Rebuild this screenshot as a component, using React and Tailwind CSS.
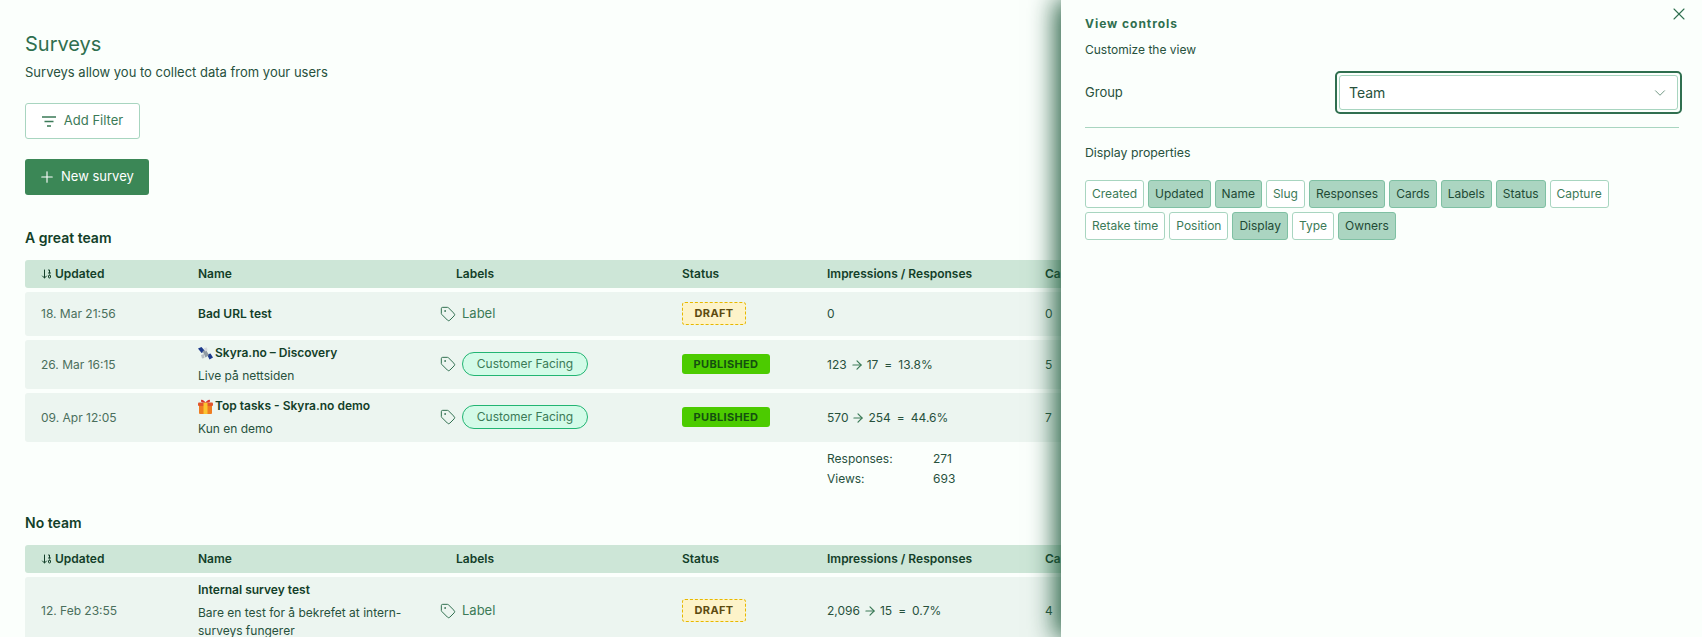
import React from "react";
import { Plus, X, ChevronDown, Tag, ArrowDown10, ArrowRight } from "lucide-react";

function Satellite() {
  return (
    <svg width="15" height="13" viewBox="0 0 15 13" className="shrink-0">
      <path d="M0 1.5 L3.5 0 L7 4 L3.5 6 Z" fill="#1c3a8c" />
      <path d="M9 7.5 L12.5 6.5 L15 10.5 L11.5 12.5 Z" fill="#1c3a8c" />
      <path d="M4.5 4 L8 3 L11 8 L7.5 10.5 Z" fill="#8f9aa3" />
      <path d="M6 1 L9 0.5 L9.5 3.5 L7 4.5 Z" fill="#d5d9dc" />
      <path d="M3 8 L6 7 L6.5 11 L4 11.5 Z" fill="#b7bec4" />
    </svg>
  );
}

function Gift() {
  return (
    <svg width="15" height="15" viewBox="0 0 15 15" className="shrink-0">
      <rect x="1" y="5" width="13" height="10" rx="1" fill="#ef7d22" />
      <rect x="0" y="3.5" width="15" height="3.5" rx="1" fill="#e2552b" />
      <rect x="5.5" y="3.5" width="4" height="11.5" fill="#fbc531" />
      <path d="M7.5 3.5 C5 0 2.5 0 3 2.5 C3.3 3.5 6 3.5 7.5 3.5 Z M7.5 3.5 C10 0 12.5 0 12 2.5 C11.7 3.5 9 3.5 7.5 3.5 Z" fill="#d9342b" />
    </svg>
  );
}

function FilterIcon() {
  return (
    <svg width="14" height="11" viewBox="0 0 14 11" className="text-[#3b7a57]" stroke="currentColor" strokeWidth="1.3">
      <path d="M0 1H14M2.5 5.5H11.5M5 10H9" />
    </svg>
  );
}

function Header() {
  return (
    <div className="flex h-7 w-[1200px] shrink-0 items-center rounded-[3px] bg-[#cde6d7] text-xs font-semibold text-[#133f29]">
      <div className="flex w-[173px] items-center gap-[2px] pl-4">
        <ArrowDown10 size={12} strokeWidth={2} />
        <span>Updated</span>
      </div>
      <div className="w-[258px]">Name</div>
      <div className="w-[226px]">Labels</div>
      <div className="w-[145px]">Status</div>
      <div className="w-[218px]">Impressions / Responses</div>
      <div>Cards</div>
    </div>
  );
}

function Label({ chip }) {
  return (
    <div className="flex items-center gap-[6px]">
      <Tag size={16} strokeWidth={1.5} className="text-[#2f6f4f]" />
      {chip ? (
        <span className="flex h-6 w-[126px] items-center justify-center rounded-full border border-[#22b573] bg-[#d3fbe8] text-xs text-[#3b7a57]">
          Customer Facing
        </span>
      ) : (
        <span className="text-[13px] text-[#3b7a57]">Label</span>
      )}
    </div>
  );
}

function Status({ published }) {
  if (published) {
    return (
      <span className="flex h-5 w-[88px] items-center justify-center rounded-[3px] bg-[#4ccb00] text-[11px] font-bold tracking-[0.03em] text-[#14500f]">
        PUBLISHED
      </span>
    );
  }
  return (
    <span className="flex h-[23px] w-16 items-center justify-center rounded-[3px] border border-dashed border-[#e6b800] bg-[#fdf3c9] text-[11px] font-bold tracking-[0.03em] text-[#5c4a10]">
      DRAFT
    </span>
  );
}

function Ratio({ a, b, c }) {
  if (!b) return <span>{a}</span>;
  return (
    <span className="flex items-center gap-[6px]">
      <span>{a}</span>
      <ArrowRight size={14} strokeWidth={2} className="-mx-[3px] text-[#3b7a57]" />
      <span>{b}</span>
      <span>=</span>
      <span>{c}</span>
    </span>
  );
}

function Row({ h, date, icon, name, sub, chip, published, ratio, cards, tall }) {
  const nameClass = tall
    ? "flex w-[242px] flex-col justify-center gap-[6px] pb-px pr-4"
    : sub
      ? "flex w-[242px] flex-col justify-center gap-[6px] pr-4 pt-px"
      : "flex w-[242px] flex-col justify-center gap-[6px] pr-4";
  return (
    <div className="flex w-[1200px] shrink-0 items-center rounded-[3px] bg-[#ecf5f0] text-xs text-[#27513c]" style={{ height: h }}>
      <div className="w-[173px] pl-4 text-[#4a6f5c]">{date}</div>
      <div className={nameClass}>
        <div className="flex items-center gap-[2px] font-semibold text-[#133f29]">
          {icon}
          <span>{name}</span>
        </div>
        {sub && <div className="leading-[18px]">{sub}</div>}
      </div>
      <div className={chip ? "w-[242px] pb-px" : "w-[242px]"}>
        <Label chip={chip} />
      </div>
      <div className="w-[145px] pb-px">
        <Status published={published} />
      </div>
      <div className="w-[218px]">
        <Ratio {...ratio} />
      </div>
      <div>{cards}</div>
    </div>
  );
}

const chips = [
  [
    ["Created", 0],
    ["Updated", 1],
    ["Name", 1],
    ["Slug", 0],
    ["Responses", 1],
    ["Cards", 1],
    ["Labels", 1],
    ["Status", 1],
    ["Capture", 0],
  ],
  [
    ["Retake time", 0],
    ["Position", 0],
    ["Display", 1],
    ["Type", 0],
    ["Owners", 1],
  ],
];

export default function App() {
  return (
    <div className="relative h-[637px] overflow-hidden bg-[#fbfffc] font-['Inter',sans-serif]">
      <div className="pl-[25px] pt-[30px]">
        <h1 className="text-xl leading-7 text-[#2f6f4f]">Surveys</h1>
        <p className="mt-[4px] text-[13px] leading-5 text-[#27513c]">Surveys allow you to collect data from your users</p>
        <button className="mt-[21px] flex h-9 w-[115px] items-center justify-center gap-[8px] rounded-[3px] border border-[#a8d5c0] bg-white text-[13px] text-[#3b7a57]">
          <FilterIcon />
          Add Filter
        </button>
        <button className="mt-[20px] flex h-9 w-[124px] items-center gap-[5px] rounded-[3px] bg-[#3b8756] pl-[13px] text-[13px] text-white">
          <Plus size={18} strokeWidth={1.5} />
          New survey
        </button>
        <h2 className="mt-[33px] text-sm font-semibold leading-5 text-[#133f29]">A great team</h2>
        <div className="mt-[12px] flex flex-col gap-1">
          <Header />
          <Row h={44} date="18. Mar 21:56" name="Bad URL test" ratio={{ a: "0" }} cards="0" />
          <Row h={49} date="26. Mar 16:15" icon={<Satellite />} name="Skyra.no – Discovery" sub="Live på nettsiden" chip published ratio={{ a: "123", b: "17", c: "13.8%" }} cards="5" />
          <Row h={49} date="09. Apr 12:05" icon={<Gift />} name="Top tasks - Skyra.no demo" sub="Kun en demo" chip published ratio={{ a: "570", b: "254", c: "44.6%" }} cards="7" />
        </div>
        <div className="ml-[802px] mt-[7px] grid w-[200px] grid-cols-[106px_1fr] text-xs leading-5 text-[#27513c]">
          <span>Responses:</span>
          <span>271</span>
          <span>Views:</span>
          <span>693</span>
        </div>
        <h2 className="mt-[24px] text-sm font-semibold leading-5 text-[#133f29]">No team</h2>
        <div className="mt-[12px] flex flex-col gap-1">
          <Header />
          <Row h={68} tall date="12. Feb 23:55" name="Internal survey test" sub="Bare en test for å bekrefet at intern-surveys fungerer" ratio={{ a: "2,096", b: "15", c: "0.7%" }} cards="4" />
        </div>
      </div>

      <aside className="absolute bottom-0 right-0 top-0 w-[641px] bg-[#fbfffc] pl-6 pr-[23px] shadow-[-6px_0_24px_rgba(31,90,60,0.95)]">
        <button className="absolute right-[13px] top-[4px] text-[#2f6f4f]">
          <X size={20} strokeWidth={1.3} />
        </button>
        <h3 className="pt-4 text-xs font-bold leading-4 tracking-[0.08em] text-[#2f6f4f]">View controls</h3>
        <p className="mt-[10px] text-xs leading-4 text-[#27513c]">Customize the view</p>
        <div className="mt-[13px] flex items-center justify-between">
          <span className="text-[13px] text-[#27513c]">Group</span>
          <div className="-mr-[3px] flex h-[43px] w-[347px] items-center rounded-[5px] border-2 border-[#2f6f4f] p-[2px]">
            <div className="flex h-full w-full items-center justify-between rounded-[3px] border border-[#a8d5c0] bg-white pl-[9px] pr-[8px] text-sm text-[#27513c]">
              Team
              <ChevronDown size={18} strokeWidth={1.3} className="text-[#6f9683]" />
            </div>
          </div>
        </div>
        <div className="mt-[13px] h-px bg-[#a8d5c0]" />
        <p className="mt-[15px] text-[12.3px] leading-5 text-[#27513c]">Display properties</p>
        <div className="mt-[17px] flex flex-col gap-1">
          {chips.map((row, i) => (
            <div key={i} className="flex gap-1">
              {row.map(([t, on]) => (
                <span
                  key={t}
                  className={
                    on
                      ? "flex h-7 items-center rounded-[3px] border border-[#7fc0a3] bg-[#abd5c1] px-[6px] text-xs text-[#1f4a35]"
                      : "flex h-7 items-center rounded-[3px] border border-[#a8d5c0] bg-white px-[6px] text-xs text-[#3b7a57]"
                  }
                >
                  {t}
                </span>
              ))}
            </div>
          ))}
        </div>
      </aside>
    </div>
  );
}
